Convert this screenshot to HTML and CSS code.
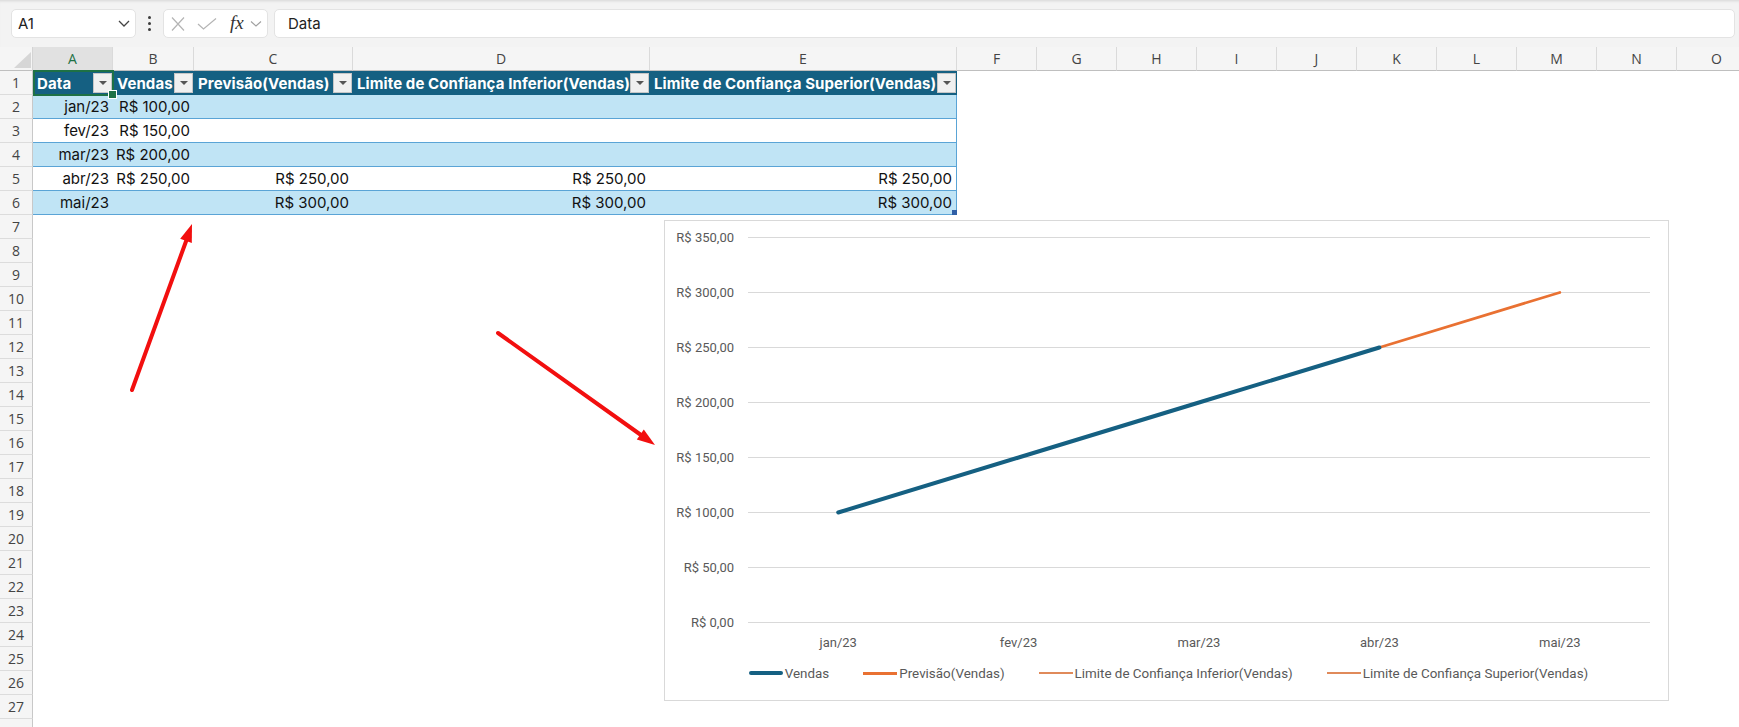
FILE: index.html
```html
<!DOCTYPE html>
<html lang="pt-BR">
<head>
<meta charset="utf-8">
<title>Previsão de Vendas</title>
<link rel="stylesheet" href="styles.css">
</head>
<body>
<div class="app">
  <div class="formula-bar">
    <div class="name-box">
      <span>A1</span>
      <svg class="nb-chev" width="12" height="7" viewBox="0 0 12 7"><polyline points="1,1 6,6 11,1" fill="none" stroke="#444" stroke-width="1.3"/></svg>
    </div>
    <div class="kebab"><i></i><i></i><i></i></div>
    <div class="fx-box">
      <svg class="ic-x" width="16" height="14" viewBox="0 0 16 14"><path d="M2 0.5 L14 13.5 M14 0.5 L2 13.5" stroke="#b4b4b4" stroke-width="1.2" fill="none"/></svg>
      <svg class="ic-check" width="20" height="12" viewBox="0 0 20 12"><polyline points="1,6 6.5,11 19,0.5" fill="none" stroke="#b4b4b4" stroke-width="1.2"/></svg>
      <span class="fx">fx</span>
      <svg class="ic-chev" width="12" height="6" viewBox="0 0 12 6"><polyline points="1,0.5 6,5 11,0.5" fill="none" stroke="#a0a0a0" stroke-width="1.1"/></svg>
    </div>
    <div class="formula-input">Data</div>
  </div>

  <div class="sheet">
    <div class="corner"><svg class="corner-tri" width="17" height="16" viewBox="0 0 17 16"><polygon points="17,0 17,16 0,16" fill="#d6d6d6"/></svg></div>
    <div class="col-h sel">A</div>
    <div class="col-h">B</div>
    <div class="col-h">C</div>
    <div class="col-h">D</div>
    <div class="col-h">E</div>
    <div class="col-h">F</div>
    <div class="col-h">G</div>
    <div class="col-h">H</div>
    <div class="col-h">I</div>
    <div class="col-h">J</div>
    <div class="col-h">K</div>
    <div class="col-h">L</div>
    <div class="col-h">M</div>
    <div class="col-h">N</div>
    <div class="col-h">O</div>

    <div class="row-h">1</div>
    <div class="th active"><span>Data</span><span class="filter"></span></div>
    <div class="th"><span>Vendas</span><span class="filter"></span></div>
    <div class="th"><span>Previsão(Vendas)</span><span class="filter"></span></div>
    <div class="th"><span>Limite de Confiança Inferior(Vendas)</span><span class="filter"></span></div>
    <div class="th"><span>Limite de Confiança Superior(Vendas)</span><span class="filter"></span></div>
    <div class="rest"></div>

    <div class="row-h">2</div>
    <div class="td band">jan/23</div>
    <div class="td band">R$ 100,00</div>
    <div class="td band"></div>
    <div class="td band"></div>
    <div class="td band last"></div>
    <div class="rest"></div>

    <div class="row-h">3</div>
    <div class="td">fev/23</div>
    <div class="td">R$ 150,00</div>
    <div class="td"></div>
    <div class="td"></div>
    <div class="td last"></div>
    <div class="rest"></div>

    <div class="row-h">4</div>
    <div class="td band">mar/23</div>
    <div class="td band">R$ 200,00</div>
    <div class="td band"></div>
    <div class="td band"></div>
    <div class="td band last"></div>
    <div class="rest"></div>

    <div class="row-h">5</div>
    <div class="td">abr/23</div>
    <div class="td">R$ 250,00</div>
    <div class="td">R$ 250,00</div>
    <div class="td">R$ 250,00</div>
    <div class="td last">R$ 250,00</div>
    <div class="rest"></div>

    <div class="row-h">6</div>
    <div class="td band">mai/23</div>
    <div class="td band"></div>
    <div class="td band">R$ 300,00</div>
    <div class="td band">R$ 300,00</div>
    <div class="td band last resize">R$ 300,00</div>
    <div class="rest"></div>

    <div class="row-h">7</div><div class="blank"></div>
    <div class="row-h">8</div><div class="blank"></div>
    <div class="row-h">9</div><div class="blank"></div>
    <div class="row-h">10</div><div class="blank"></div>
    <div class="row-h">11</div><div class="blank"></div>
    <div class="row-h">12</div><div class="blank"></div>
    <div class="row-h">13</div><div class="blank"></div>
    <div class="row-h">14</div><div class="blank"></div>
    <div class="row-h">15</div><div class="blank"></div>
    <div class="row-h">16</div><div class="blank"></div>
    <div class="row-h">17</div><div class="blank"></div>
    <div class="row-h">18</div><div class="blank"></div>
    <div class="row-h">19</div><div class="blank"></div>
    <div class="row-h">20</div><div class="blank"></div>
    <div class="row-h">21</div><div class="blank"></div>
    <div class="row-h">22</div><div class="blank"></div>
    <div class="row-h">23</div><div class="blank"></div>
    <div class="row-h">24</div><div class="blank"></div>
    <div class="row-h">25</div><div class="blank"></div>
    <div class="row-h">26</div><div class="blank"></div>
    <div class="row-h">27</div><div class="blank"></div>
    <div class="row-h"></div><div class="blank"></div>
  </div>

  <div class="chart">
    <svg class="plot" width="1003" height="440" viewBox="0 0 1003 440">
      <g class="grid">
        <line x1="83" y1="16.5" x2="985" y2="16.5"/>
        <line x1="83" y1="71.5" x2="985" y2="71.5"/>
        <line x1="83" y1="126.5" x2="985" y2="126.5"/>
        <line x1="83" y1="181.5" x2="985" y2="181.5"/>
        <line x1="83" y1="236.5" x2="985" y2="236.5"/>
        <line x1="83" y1="291.5" x2="985" y2="291.5"/>
        <line x1="83" y1="346.5" x2="985" y2="346.5"/>
        <line x1="83" y1="401.5" x2="985" y2="401.5"/>
      </g>
      <g class="ylab">
        <text x="69" y="21">R$ 350,00</text>
        <text x="69" y="76">R$ 300,00</text>
        <text x="69" y="131">R$ 250,00</text>
        <text x="69" y="186">R$ 200,00</text>
        <text x="69" y="241">R$ 150,00</text>
        <text x="69" y="296">R$ 100,00</text>
        <text x="69" y="351">R$ 50,00</text>
        <text x="69" y="406">R$ 0,00</text>
      </g>
      <g class="xlab">
        <text x="173.2" y="426">jan/23</text>
        <text x="353.6" y="426">fev/23</text>
        <text x="534" y="426">mar/23</text>
        <text x="714.4" y="426">abr/23</text>
        <text x="894.8" y="426">mai/23</text>
      </g>
      <polyline class="s-fore" points="714.4,126.5 894.8,71.5"/>
      <polyline class="s-vendas" points="173.2,291.5 353.6,236.5 534,181.5 714.4,126.5"/>
    </svg>
    <div class="legend">
      <div class="legend-item"><span class="sw vendas"></span><span>Vendas</span></div>
      <div class="legend-item"><span class="sw"></span><span>Previsão(Vendas)</span></div>
      <div class="legend-item"><span class="sw lim"></span><span>Limite de Confiança Inferior(Vendas)</span></div>
      <div class="legend-item"><span class="sw lim"></span><span>Limite de Confiança Superior(Vendas)</span></div>
    </div>
  </div>

  <svg class="arrows" width="1739" height="727" viewBox="0 0 1739 727">
    <line x1="132" y1="390" x2="186.5" y2="240" />
    <polygon points="192,224 191.8,243 180.2,238.8"/>
    <line x1="498" y1="333" x2="641" y2="435" />
    <polygon points="655,445 636.8,439.4 643.8,429.6"/>
  </svg>
</div>
</body>
</html>
```

FILE: styles.css
```css
* { box-sizing: border-box; }
html, body { margin: 0; padding: 0; }
body {
  width: 1739px;
  height: 727px;
  overflow: hidden;
  background: #fff;
  font-family: Inter, "Liberation Sans", sans-serif;
}
.app {
  position: relative;
  width: 1739px;
  height: 727px;
  overflow: hidden;
}

/* formula bar */
.formula-bar {
  height: 47px;
  background: #f3f3f3;
  display: flex;
  align-items: flex-start;
  padding: 9px 4px 0 11px;
  box-shadow: inset 0 3px 3px -2px rgba(0, 0, 0, 0.12);
}
.name-box {
  width: 125px;
  height: 29px;
  flex: none;
  background: #fff;
  border: 1px solid #e3e3e3;
  border-radius: 5px;
  display: flex;
  align-items: center;
  justify-content: space-between;
  padding: 0 5px 0 6px;
  font-size: 15px;
  color: #222;
}
.kebab {
  width: 27px;
  height: 29px;
  flex: none;
  display: flex;
  flex-direction: column;
  align-items: center;
  justify-content: center;
  gap: 3px;
}
.kebab i {
  display: block;
  width: 3px;
  height: 3px;
  background: #3c3c3c;
  border-radius: 50%;
}
.fx-box {
  width: 105px;
  height: 29px;
  flex: none;
  margin-right: 6px;
  background: #fff;
  border: 1px solid #e3e3e3;
  border-radius: 5px;
  display: flex;
  align-items: center;
  padding-left: 6px;
}
.ic-check { margin-left: 11px; }
.fx {
  margin-left: 13px;
  font-family: "Liberation Serif", serif;
  font-style: italic;
  font-size: 19px;
  color: #333;
  line-height: 1;
  margin-top: -2px;
}
.ic-chev { margin-left: 6px; }
.formula-input {
  flex: 1;
  height: 29px;
  background: #fff;
  border: 1px solid #e3e3e3;
  border-radius: 5px;
  display: flex;
  align-items: center;
  padding-left: 13px;
  font-size: 15px;
  color: #222;
}

/* sheet grid */
.sheet {
  display: grid;
  grid-template-columns: 33px 80px 81px 159px 297px 307px repeat(10, 80px);
  grid-auto-rows: 24px;
  width: 1757px;
}
.corner {
  position: relative;
  background: #f5f5f5;
  border-right: 1px solid #d4d4d4;
  border-bottom: 1px solid #bfbfbf;
}
.corner-tri {
  position: absolute;
  right: 1px;
  bottom: 2px;
}
.col-h {
  background: #f5f5f5;
  border-right: 1px solid #dadada;
  border-bottom: 1px solid #bfbfbf;
  display: flex;
  align-items: center;
  justify-content: center;
  font-family: "Open Sans", sans-serif;
  font-size: 14px;
  color: #444;
}
.col-h.sel {
  background: #e1e1e1;
  color: #1e7145;
}
.row-h {
  background: #f5f5f5;
  border-right: 1px solid #c8c8c8;
  border-bottom: 1px solid #dcdcdc;
  display: flex;
  align-items: center;
  justify-content: center;
  font-family: "Open Sans", sans-serif;
  font-size: 14px;
  color: #444;
}

/* table */
.th {
  position: relative;
  background: #156082;
  color: #fff;
  font-weight: 700;
  font-size: 15px;
  letter-spacing: 0.1px;
  display: flex;
  align-items: center;
  justify-content: space-between;
  padding: 0 1px 0 4px;
  white-space: nowrap;
}
.filter {
  flex: none;
  width: 19px;
  height: 20px;
  background: #f0f0f0;
  border: 1px solid #c6c6c6;
  display: flex;
  align-items: center;
  justify-content: center;
}
.filter::after {
  content: "";
  border-left: 4px solid transparent;
  border-right: 4px solid transparent;
  border-top: 4px solid #555;
}
.th.active::before {
  content: "";
  position: absolute;
  left: 0;
  top: -1px;
  right: -1px;
  bottom: -1px;
  border: 2px solid #1e7145;
  z-index: 2;
}
.th.active::after {
  content: "";
  position: absolute;
  right: -4px;
  bottom: -4px;
  width: 7px;
  height: 7px;
  background: #1e7145;
  border: 1px solid #fff;
  z-index: 3;
}
.td {
  position: relative;
  border-bottom: 1px solid #5aa4d6;
  display: flex;
  align-items: center;
  justify-content: flex-end;
  padding-right: 4px;
  font-size: 15px;
  color: #111;
  white-space: nowrap;
}
.band { background: #c0e4f5; }
.td.last { border-right: 1px solid #5aa4d6; }
.td.resize::after {
  content: "";
  position: absolute;
  right: -1px;
  bottom: -1px;
  width: 5px;
  height: 5px;
  background: #2f5fa6;
}
.rest { grid-column: span 10; }
.blank { grid-column: span 15; }

/* chart */
.chart {
  position: absolute;
  left: 664px;
  top: 220px;
  width: 1005px;
  height: 481px;
  background: #fff;
  border: 1px solid #d9d9d9;
  display: flex;
  flex-direction: column;
  font-family: Roboto, sans-serif;
}
.plot { display: block; flex: none; }
.grid line { stroke: #d9d9d9; stroke-width: 1; }
.ylab text, .xlab text {
  font-family: Roboto, sans-serif;
  font-size: 13px;
  fill: #595959;
}
.ylab text { text-anchor: end; }
.xlab text { text-anchor: middle; }
.s-vendas {
  fill: none;
  stroke: #156082;
  stroke-width: 4;
  stroke-linecap: round;
  stroke-linejoin: round;
}
.s-fore {
  fill: none;
  stroke: #e97132;
  stroke-width: 2.75;
  stroke-linecap: round;
}
.legend {
  height: 24px;
  display: flex;
  justify-content: center;
  align-items: center;
  gap: 34px;
  font-size: 13.4px;
  color: #595959;
  padding-left: 4px;
}
.legend-item {
  display: flex;
  align-items: center;
  gap: 2px;
}
.sw {
  display: block;
  width: 34px;
  height: 3px;
  background: #e97132;
}
.sw.vendas {
  height: 4px;
  background: #156082;
  border-radius: 2px;
}
.sw.lim {
  height: 2px;
  background: #e08a5a;
}

/* annotation arrows */
.arrows {
  position: absolute;
  left: 0;
  top: 0;
  pointer-events: none;
}
.arrows line {
  stroke: #f20f0f;
  stroke-width: 4;
  stroke-linecap: round;
}
.arrows polygon { fill: #f20f0f; }
```
